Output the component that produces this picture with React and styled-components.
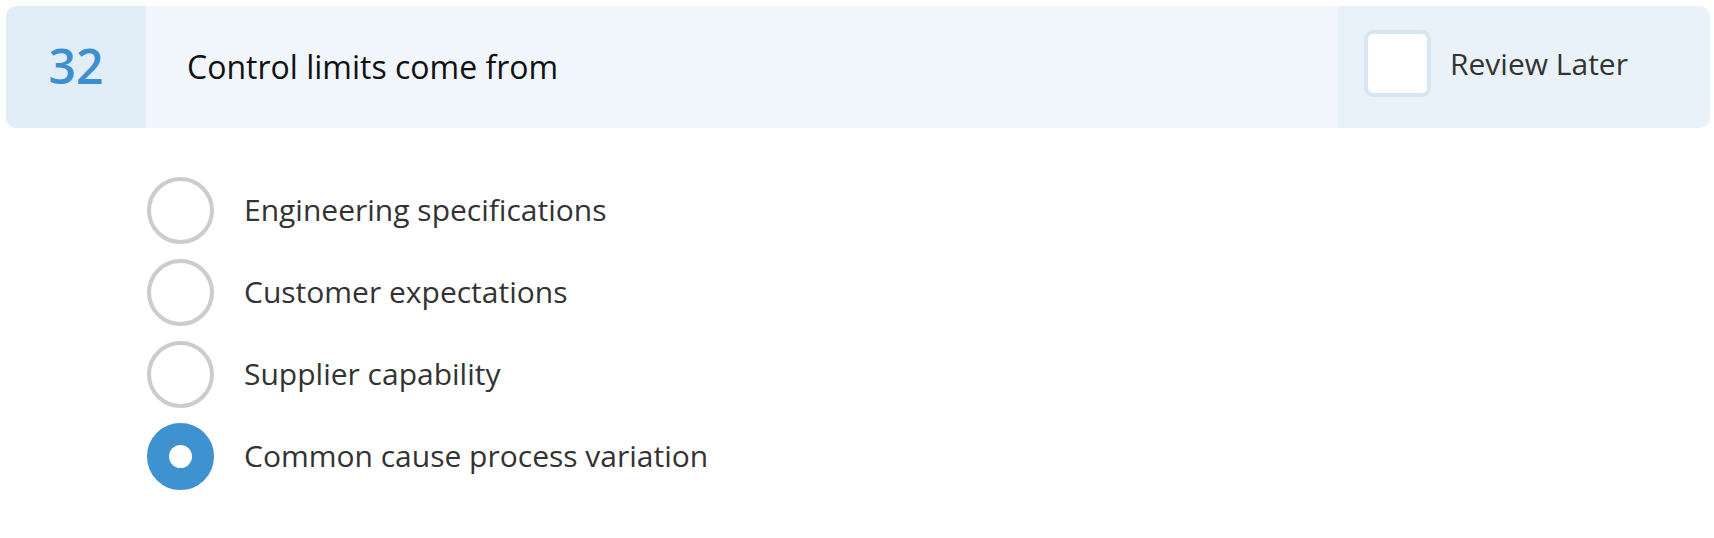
import styled, { createGlobalStyle } from "styled-components";

const GlobalStyle = createGlobalStyle`
  html, body {
    margin: 0;
    padding: 0;
    background: #ffffff;
  }
  body {
    font-family: "Open Sans", "Noto Sans", sans-serif;
  }
`;

const options = [
  { id: "a", text: "Engineering specifications" },
  { id: "b", text: "Customer expectations" },
  { id: "c", text: "Supplier capability" },
  { id: "d", text: "Common cause process variation", checked: true },
];

function App() {
  return (
    <>
      <GlobalStyle />
      <Page>
        <QuestionHeader>
          <Number>32</Number>
          <Question>Control limits come from</Question>
          <ReviewPanel>
            <Checkbox />
            <ReviewLabel>Review Later</ReviewLabel>
          </ReviewPanel>
        </QuestionHeader>
        <Options>
          {options.map(({ id, text, checked }) => (
            <Option key={id}>
              <Radio $checked={checked} />
              <OptionText>{text}</OptionText>
            </Option>
          ))}
        </Options>
      </Page>
    </>
  );
}
export default App;

const Page = styled.div`
  padding: 6px 4px 0 6px;
`;

const QuestionHeader = styled.div`
  display: flex;
  height: 122px;
  border-radius: 10px;
  overflow: hidden;
  background: #f0f6fb;
`;

const Number = styled.div`
  width: 140px;
  flex-shrink: 0;
  display: flex;
  align-items: center;
  justify-content: center;
  background: #e1eef8;
  color: #3d8fd0;
  font-size: 48px;
  font-weight: 600;
  line-height: 1;
  padding-bottom: 2px;
`;

const Question = styled.div`
  flex: 1;
  display: flex;
  align-items: center;
  padding-left: 41px;
  padding-bottom: 2px;
  color: #111111;
  font-size: 32px;
`;

const ReviewPanel = styled.div`
  width: 372px;
  flex-shrink: 0;
  display: flex;
  align-items: center;
  gap: 19px;
  padding-left: 26px;
  padding-bottom: 8px;
  box-sizing: border-box;
  background: #e9f2f9;
`;

const Checkbox = styled.div`
  width: 67px;
  height: 67px;
  box-sizing: border-box;
  border: 4px solid #d6e6f5;
  border-radius: 9px;
  background: #ffffff;
`;

const ReviewLabel = styled.span`
  color: #333333;
  font-size: 30px;
`;

const Options = styled.div`
  display: flex;
  flex-direction: column;
  gap: 15px;
  margin-top: 49px;
  padding-left: 141px;
`;

const Option = styled.label`
  display: flex;
  align-items: center;
  gap: 30px;
  height: 67px;
`;

const Radio = styled.span`
  width: 67px;
  height: 67px;
  box-sizing: border-box;
  border-radius: 50%;
  flex-shrink: 0;
  border: ${({ $checked }) =>
    $checked ? "22px solid #3e92d0" : "4px solid #cccccc"};
  background: #ffffff;
`;

const OptionText = styled.span`
  color: #333333;
  font-size: 30px;
  padding-bottom: 2px;
`;
